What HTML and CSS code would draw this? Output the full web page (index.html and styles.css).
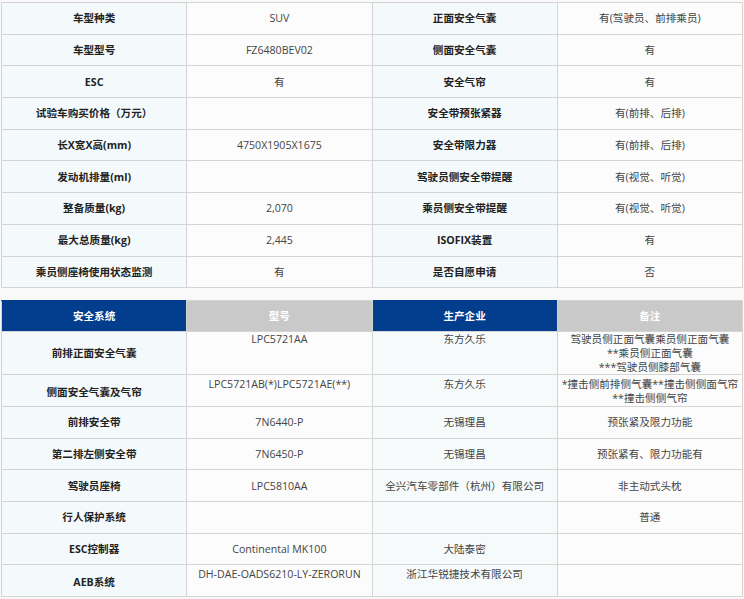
FILE: index.html
```html
<!DOCTYPE html>
<html lang="zh-CN">
<head>
<meta charset="utf-8">
<title>车型参数</title>
<link rel="stylesheet" href="styles.css">
</head>
<body>
<table class="spec">
  <tbody>
    <tr><td class="lab">车型种类</td><td class="val">SUV</td><td class="lab">正面安全气囊</td><td class="val">有(驾驶员、前排乘员)</td></tr>
    <tr><td class="lab">车型型号</td><td class="val">FZ6480BEV02</td><td class="lab">侧面安全气囊</td><td class="val">有</td></tr>
    <tr><td class="lab">ESC</td><td class="val">有</td><td class="lab">安全气帘</td><td class="val">有</td></tr>
    <tr><td class="lab">试验车购买价格（万元）</td><td class="val"></td><td class="lab">安全带预张紧器</td><td class="val">有(前排、后排)</td></tr>
    <tr><td class="lab">长X宽X高(mm)</td><td class="val">4750X1905X1675</td><td class="lab">安全带限力器</td><td class="val">有(前排、后排)</td></tr>
    <tr><td class="lab">发动机排量(ml)</td><td class="val"></td><td class="lab">驾驶员侧安全带提醒</td><td class="val">有(视觉、听觉)</td></tr>
    <tr><td class="lab">整备质量(kg)</td><td class="val">2,070</td><td class="lab">乘员侧安全带提醒</td><td class="val">有(视觉、听觉)</td></tr>
    <tr><td class="lab">最大总质量(kg)</td><td class="val">2,445</td><td class="lab">ISOFIX装置</td><td class="val">有</td></tr>
    <tr><td class="lab">乘员侧座椅使用状态监测</td><td class="val">有</td><td class="lab">是否自愿申请</td><td class="val">否</td></tr>
  </tbody>
</table>

<table class="sys">
  <thead>
    <tr><th class="hb">安全系统</th><th class="hg">型号</th><th class="hb">生产企业</th><th class="hg">备注</th></tr>
  </thead>
  <tbody>
    <tr class="tall"><td class="lab">前排正面安全气囊</td><td class="val top">LPC5721AA</td><td class="alt top">东方久乐</td><td class="val">驾驶员侧正面气囊乘员侧正面气囊<br>**乘员侧正面气囊<br>***驾驶员侧膝部气囊</td></tr>
    <tr class="r2"><td class="lab">侧面安全气囊及气帘</td><td class="val top">LPC5721AB(*)LPC5721AE(**)</td><td class="alt top">东方久乐</td><td class="val top">*撞击侧前排侧气囊**撞击侧侧面气帘<br>**撞击侧侧气帘</td></tr>
    <tr><td class="lab">前排安全带</td><td class="val">7N6440-P</td><td class="alt">无锡理昌</td><td class="val">预张紧及限力功能</td></tr>
    <tr><td class="lab">第二排左侧安全带</td><td class="val">7N6450-P</td><td class="alt">无锡理昌</td><td class="val">预张紧有、限力功能有</td></tr>
    <tr><td class="lab">驾驶员座椅</td><td class="val">LPC5810AA</td><td class="alt">全兴汽车零部件（杭州）有限公司</td><td class="val">非主动式头枕</td></tr>
    <tr><td class="lab">行人保护系统</td><td class="val"></td><td class="alt"></td><td class="val">普通</td></tr>
    <tr><td class="lab">ESC控制器</td><td class="val">Continental MK100</td><td class="alt">大陆泰密</td><td class="val"></td></tr>
    <tr class="r8"><td class="lab">AEB系统</td><td class="val top">DH-DAE-OADS6210-LY-ZERORUN</td><td class="alt top">浙江华锐捷技术有限公司</td><td class="val"></td></tr>
  </tbody>
</table>
</body>
</html>
```

FILE: styles.css
```css
html, body {
  margin: 0;
  background: #f9f9f9;
}
body {
  padding: 2px 1px 0 1px;
  font-family: "Open Sans", "Noto Sans CJK SC", sans-serif;
  font-size: 10.6px;
  color: #444;
}
table {
  width: 742px;
  border-collapse: collapse;
  table-layout: fixed;
}
td, th {
  border: 1px solid #d4d4d4;
  text-align: center;
  vertical-align: middle;
  line-height: 14px;
  padding: 0 2px;
  white-space: nowrap;
  overflow: hidden;
}
.spec td {
  height: 30.7px;
}
.sys {
  margin-top: 12px;
}
.sys th {
  height: 30px;
  color: #fff;
  font-weight: bold;
}
.sys td {
  height: 30.7px;
}
.sys .tall td {
  height: 41px;
}
.sys .r2 td {
  height: 28.7px;
  padding-top: 2px;
}
.sys .r8 td {
  height: 28.7px;
  padding-top: 2px;
}
.hb {
  background: #033d8e;
  border-color: #033d8e #d4d4d4 #d4d4d4 #d4d4d4;
}
.hg {
  background: #c9c9c9;
}
.lab {
  background: #f4fafb;
  color: #222;
  font-weight: bold;
}
.val {
  background: #fcfcfc;
}
.alt {
  background: #f6fafb;
}
.top {
  vertical-align: top;
}
```
